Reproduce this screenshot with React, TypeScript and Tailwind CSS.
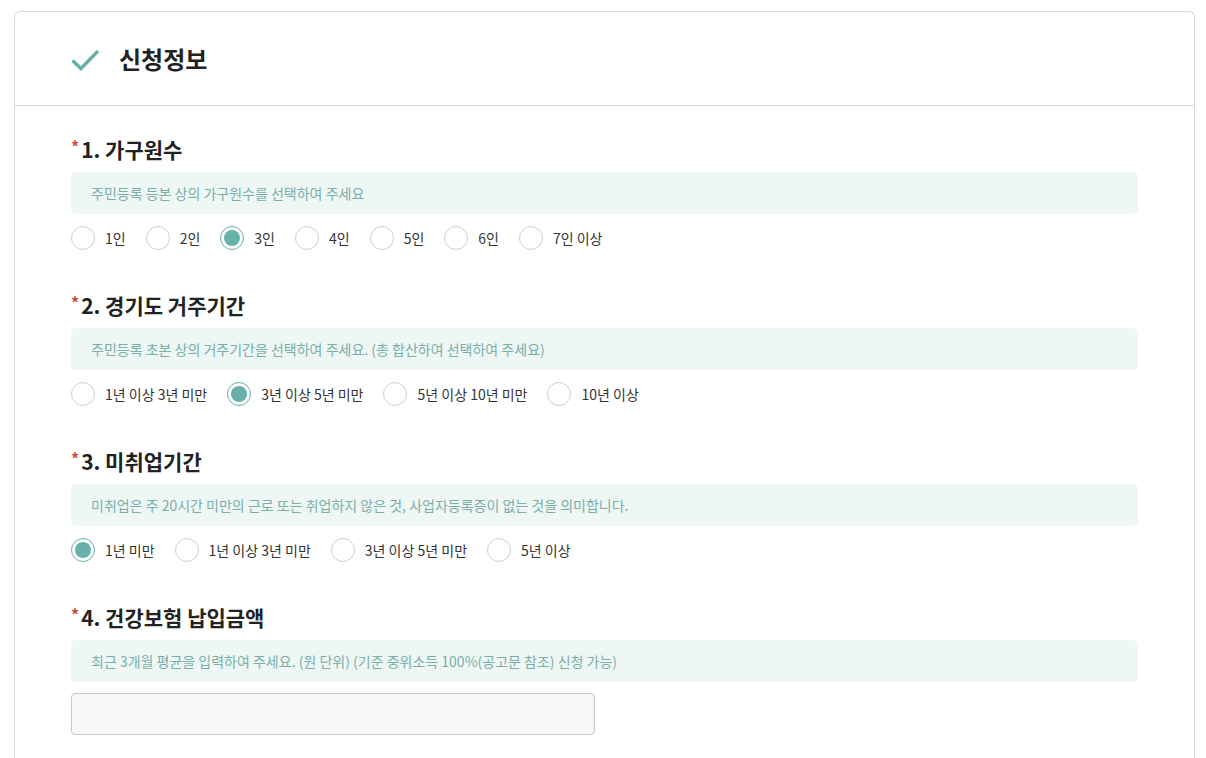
const TEAL = "#68b0ab";

type Question = {
  no: number;
  title: string;
  hint: string;
  options?: string[];
  selected?: number;
};

const questions: Question[] = [
  {
    no: 1,
    title: "가구원수",
    hint: "주민등록 등본 상의 가구원수를 선택하여 주세요",
    options: ["1인", "2인", "3인", "4인", "5인", "6인", "7인 이상"],
    selected: 2,
  },
  {
    no: 2,
    title: "경기도 거주기간",
    hint: "주민등록 초본 상의 거주기간을 선택하여 주세요. (총 합산하여 선택하여 주세요)",
    options: ["1년 이상 3년 미만", "3년 이상 5년 미만", "5년 이상 10년 미만", "10년 이상"],
    selected: 1,
  },
  {
    no: 3,
    title: "미취업기간",
    hint: "미취업은 주 20시간 미만의 근로 또는 취업하지 않은 것, 사업자등록증이 없는 것을 의미합니다.",
    options: ["1년 미만", "1년 이상 3년 미만", "3년 이상 5년 미만", "5년 이상"],
    selected: 0,
  },
  {
    no: 4,
    title: "건강보험 납입금액",
    hint: "최근 3개월 평균을 입력하여 주세요. (원 단위) (기준 중위소득 100%(공고문 참조) 신청 가능)",
  },
];

function Radio({ label, checked }: { label: string; checked: boolean }) {
  return (
    <label className="mr-[20px] flex items-center gap-[10px]">
      <span
        className={
          checked
            ? "flex h-6 w-6 items-center justify-center rounded-full border border-[#68b0ab] bg-white"
            : "flex h-6 w-6 items-center justify-center rounded-full border border-[#cfcfcf] bg-white"
        }
      >
        {checked && <span className="h-4 w-4 rounded-full bg-[#68b0ab]" />}
      </span>
      <span className="text-[14px] leading-5 text-[#333]">{label}</span>
    </label>
  );
}

function Section({ q }: { q: Question }) {
  return (
    <section className="mb-[41px]">
      <h3 className="flex h-7 items-center text-[21px] font-bold leading-7 text-[#222]">
        <span className="mr-[2px] -mt-[6px] text-[16px] text-[#d9483b]">*</span>
        {q.no}. {q.title}
      </h3>
      <div className="mt-[9px] flex h-[42px] items-center rounded-[5px] bg-[#eff7f5] px-5 text-[14px] text-[#79aea9]">
        {q.hint}
      </div>
      {q.options ? (
        <div className="mt-3 flex items-center">
          {q.options.map((o, i) => (
            <Radio key={o} label={o} checked={i === q.selected} />
          ))}
        </div>
      ) : (
        <input
          type="text"
          className="mt-[11px] block h-[42px] w-[524px] rounded-[4px] border border-[#c8c8c8] bg-[#f7f7f7] px-3 text-[14px] outline-none"
        />
      )}
    </section>
  );
}

export default function App() {
  return (
    <div
      className="min-h-screen bg-white pl-[14px] pr-[11px] pt-[11px]"
      style={{ fontFamily: '"Noto Sans CJK KR", "Noto Sans", sans-serif' }}
    >
      <div className="rounded-t-[6px] border border-b-0 border-[#d9d9d9] bg-white">
        {/* Header */}
        <header className="flex h-[94px] items-center border-b border-[#d9d9d9] px-[56px]">
          <svg width="30" height="24" viewBox="0 0 30 24" fill="none" className="mr-[18px] mt-[2px]">
            <path d="M1.5 12.5 L10 20.5 L27 3" stroke={TEAL} strokeWidth="3.4" strokeLinecap="butt" />
          </svg>
          <h2 className="text-[24px] font-bold text-[#222]">신청정보</h2>
        </header>

        {/* Body */}
        <div className="px-[56px] pb-[60px] pt-[29px]">
          {questions.map((q) => (
            <Section key={q.no} q={q} />
          ))}
        </div>
      </div>
    </div>
  );
}
